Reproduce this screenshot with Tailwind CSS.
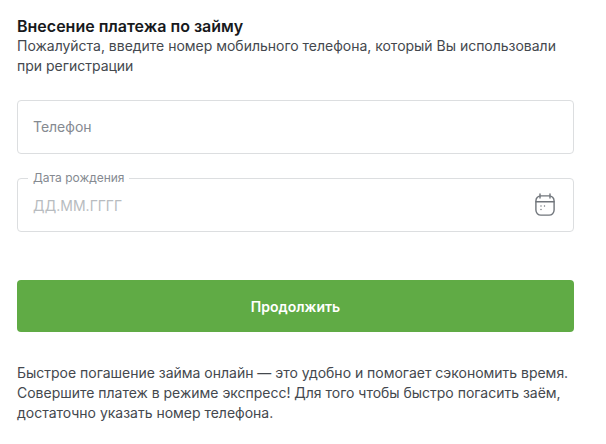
<!DOCTYPE html>
<html lang="ru">
<head>
<meta charset="utf-8">
<script src="https://cdn.jsdelivr.net/npm/@tailwindcss/browser@4"></script>
</head>
<body class="bg-white font-['Inter',sans-serif]">
<div class="w-[606px] h-[444px] overflow-hidden pl-[17px] pr-[32px] pt-[16px]">
  <h1 class="text-[16px] leading-[20px] font-semibold text-[#17191c]">Внесение платежа по займу</h1>
  <p class="text-[14px] leading-[20px] tracking-[-0.015px] text-[#44484e]">Пожалуйста, введите номер мобильного телефона, который Вы использовали при регистрации</p>
  <div class="mt-[24px] h-[54px] border border-[#dcdee0] rounded-[4px] flex items-center px-[15px] pb-[2px] text-[14px] tracking-[-0.015px] text-[#858a91]">Телефон</div>
  <div class="relative mt-[24px] h-[54px] border border-[#dcdee0] rounded-[4px] flex items-center justify-between pl-[15px] pr-[18px] text-[14px] text-[#b8bcc0]">
    <span class="absolute left-[10px] top-[-9px] bg-white px-[5px] text-[12px] leading-[16px] tracking-[-0.015px] text-[#858a91]">Дата рождения</span>
    <span>ДД.ММ.ГГГГ</span>
    <svg width="20" height="24" viewBox="0 0 20 24" fill="none" stroke="#70757b" stroke-width="1.4" stroke-linecap="round">
      <rect x="0.9" y="2.9" width="18.2" height="19.2" rx="5"/>
      <path d="M1 8.7H19M5 0.9V5M15 0.9V5"/>
      <path d="M6 13h.01M9.5 13h.01M6 16.5h.01" stroke-width="1.4"/>
    </svg>
  </div>
  <button class="mt-[48px] w-full h-[52px] rounded-[4px] bg-[#60ab45] text-white text-[14px] font-semibold">Продолжить</button>
  <p class="mt-[31px] text-[14px] leading-[20px] tracking-[-0.015px] text-[#44484e]">Быстрое погашение займа онлайн — это удобно и помогает сэкономить время. Совершите платеж в режиме экспресс! Для того чтобы быстро погасить заём, достаточно указать номер телефона.</p>
</div>
</body>
</html>
